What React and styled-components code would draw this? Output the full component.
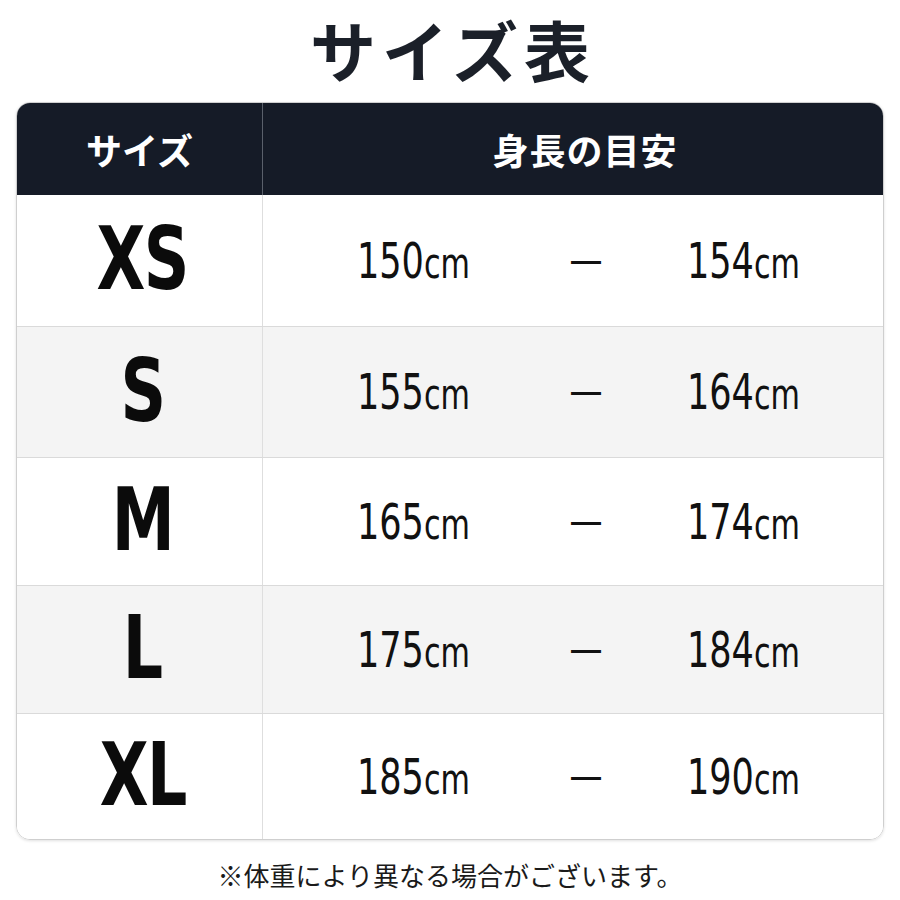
import React from 'react';
import styled, { createGlobalStyle } from 'styled-components';

const GlobalStyle = createGlobalStyle`
    body {
        margin: 0;
        background: #ffffff;
        font-family: "Noto Sans CJK JP", "Noto Sans", sans-serif;
    }
`;

const rows = [
    { size: 'XS', from: 150, to: 154, height: 132 },
    { size: 'S', from: 155, to: 164, height: 131 },
    { size: 'M', from: 165, to: 174, height: 128 },
    { size: 'L', from: 175, to: 184, height: 128 },
    { size: 'XL', from: 185, to: 190, height: 125 },
];

const SizeChart = () => {
    return (
        <Page>
            <GlobalStyle />
            <Title>サイズ表</Title>
            <Table>
                <HeaderRow>
                    <HeaderCell>サイズ</HeaderCell>
                    <HeaderCell $wide>身長の目安</HeaderCell>
                </HeaderRow>
                {rows.map((row, i) => (
                    <Row
                        key={row.size}
                        $height={row.height}
                        $shaded={i % 2 === 1}
                        $last={i === rows.length - 1}
                    >
                        <SizeCell><SizeLabel>{row.size}</SizeLabel></SizeCell>
                        <RangeCell>
                            <Height>{row.from}<Unit>cm</Unit></Height>
                            <Dash>—</Dash>
                            <Height>{row.to}<Unit>cm</Unit></Height>
                        </RangeCell>
                    </Row>
                ))}
            </Table>
            <Note>※体重により異なる場合がございます。</Note>
        </Page>
    );
};

export default SizeChart;

const Page = styled.div`
    width: 900px;
    height: 900px;
    display: flex;
    flex-direction: column;
    align-items: center;
    overflow: hidden;
`;

const Title = styled.h1`
    margin: 0;
    line-height: normal;
    font-size: 66px;
    font-weight: 700;
    color: #1b2029;
    letter-spacing: 6px;
    padding-left: 6px;
`;

const Table = styled.div`
    margin-top: 6px;
    width: 868px;
    border: 1px solid #cfcfcf;
    border-radius: 14px;
    overflow: hidden;
    box-shadow: 0 1px 3px rgba(0, 0, 0, 0.12);
    box-sizing: border-box;
`;

const HeaderRow = styled.div`
    display: grid;
    grid-template-columns: 245px 1fr;
    height: 92px;
    background: #151b27;
`;

const HeaderCell = styled.div`
    display: flex;
    align-items: center;
    justify-content: center;
    color: #ffffff;
    font-size: 36px;
    font-weight: 700;
    letter-spacing: ${p => (p.$wide ? '1px' : '0')};
    padding-left: ${p => (p.$wide ? '24px' : '0')};
    border-left: ${p => (p.$wide ? '1px solid #5a606b' : 'none')};
`;

const Row = styled.div`
    display: grid;
    grid-template-columns: 245px 1fr;
    height: ${p => p.$height}px;
    background: ${p => (p.$shaded ? '#f4f4f4' : '#ffffff')};
    border-bottom: ${p => (p.$last ? 'none' : '1px solid #dadada')};
    box-sizing: border-box;
`;

const SizeCell = styled.div`
    display: flex;
    align-items: center;
    justify-content: center;
    padding-left: 6px;
    padding-bottom: 4px;
`;

const SizeLabel = styled.span`
    display: inline-block;
    font-family: "DejaVu Sans Condensed", "DejaVu Sans", sans-serif;
    font-weight: 700;
    font-size: 88px;
    letter-spacing: -2px;
    color: #0b0b0b;
    transform: scaleX(0.8);
`;

const RangeCell = styled.div`
    display: grid;
    grid-template-columns: 200px 146px 168px;
    align-items: center;
    justify-items: center;
    padding-left: 50px;
    border-left: 1px solid #dedede;
`;

const Height = styled.span`
    display: inline-block;
    font-family: "DejaVu Sans Condensed", "DejaVu Sans", sans-serif;
    font-size: 50px;
    color: #111111;
    line-height: 1;
    transform: scaleX(0.78);
    white-space: nowrap;
`;

const Unit = styled.span`
    font-size: 0.86em;
`;

const Dash = styled.span`
    font-family: "Liberation Sans", sans-serif;
    font-size: 30px;
    font-weight: 700;
    color: #111111;
    line-height: 1;
`;

const Note = styled.p`
    margin: 18px 0 0;
    font-size: 26px;
    line-height: 34px;
    color: #1a1a1a;
`;
